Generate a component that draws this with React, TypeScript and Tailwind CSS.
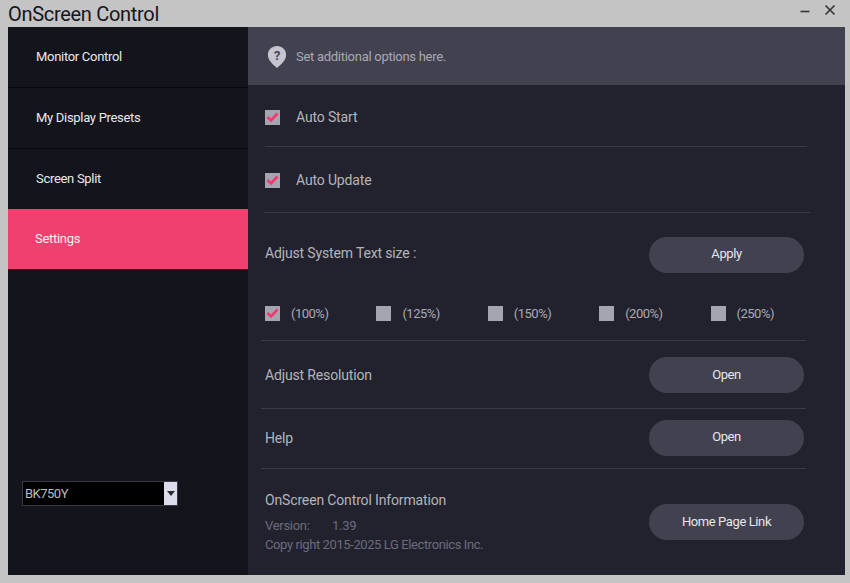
const navItems = ['Monitor Control', 'My Display Presets', 'Screen Split'];
const sizes = ['(100%)', '(125%)', '(150%)', '(200%)', '(250%)'];

function CheckBox({ checked }: { checked: boolean }) {
  return (
    <span className="flex h-[15px] w-[15px] shrink-0 items-center justify-center bg-[#a5a4b1]">
      {checked && (
        <svg width="13" height="11" viewBox="0 0 13 11" fill="none">
          <path d="M1.5 5L5 8.5L11.5 1.5" stroke="#f5376f" strokeWidth="2.6" />
        </svg>
      )}
    </span>
  );
}

function PillButton({ label }: { label: string }) {
  return (
    <button type="button" className="h-[36px] w-[155px] rounded-full bg-[#42414f] pb-[1px] text-[13px] tracking-[-0.4px] text-[#e6e6ea]">
      {label}
    </button>
  );
}

export default function App() {
  return (
    <div className="flex h-[583px] w-[850px] flex-col bg-[#c4c4c4] font-['Roboto',sans-serif] text-[14px]">
      <div className="flex h-[27px] items-end justify-between pl-[8px] pr-[14px]">
        <span className="text-[20px] leading-[25px] tracking-[-0.3px] text-[#15151b]">OnScreen Control</span>
        <div className="flex items-center gap-[14px] self-start pt-[4px]">
          <svg width="10" height="12" viewBox="0 0 10 12">
            <path d="M0.5 7.5H9.5" stroke="#333" strokeWidth="1.6" />
          </svg>
          <svg width="12" height="12" viewBox="0 0 12 12" fill="none">
            <path d="M1.5 1.5L10.5 10.5M10.5 1.5L1.5 10.5" stroke="#333" strokeWidth="1.6" />
          </svg>
        </div>
      </div>

      <div className="ml-[8px] flex h-[548px] w-[837px]">
        <aside className="flex w-[240px] shrink-0 flex-col bg-[#14141c] text-[13px] tracking-[-0.3px]">
          {navItems.map((item) => (
            <div key={item} className="flex h-[61px] items-center border-b border-[#08080c] pl-[28px] text-[#e8e8ec]">
              {item}
            </div>
          ))}
          <div className="-mt-px flex h-[60px] items-center bg-[#f0406f] pl-[27px] text-[#f6f0f2]">Settings</div>
          <div className="mt-[212px] ml-[14px] flex h-[25px] w-[156px] items-stretch border border-[#3a3a42] bg-black">
            <span className="flex-1 pl-[2px] text-[13px] leading-[23px] tracking-[-0.5px] text-[#b9bcc0]">BK750Y</span>
            <span className="flex w-[13px] items-center justify-center bg-[#dcdcec]">
              <svg width="8" height="5" viewBox="0 0 8 5">
                <path d="M0 0H8L4 5Z" fill="#2a2a32" />
              </svg>
            </span>
          </div>
        </aside>

        <main className="flex min-w-0 flex-1 flex-col bg-[#22222e] text-[14px] tracking-[-0.15px] text-[#b4b4bc]">
          <div className="flex h-[58px] items-center gap-[9px] bg-[#42414f] pl-[19px] pt-[2px] text-[13px] tracking-[-0.28px] text-[#a9a9b4]">
            <svg width="20" height="24" viewBox="0 0 22 26">
              <path d="M11 1C5.5 1 1 5.3 1 10.7C1 16.5 6.5 21 11 25C15.5 21 21 16.5 21 10.7C21 5.3 16.5 1 11 1Z" fill="#c5c4d0" />
              <text x="11" y="16" textAnchor="middle" fontSize="14" fontWeight="700" fill="#42414f">?</text>
            </svg>
            <span>Set additional options here.</span>
          </div>

          <div className="ml-[17px] mr-[38px] flex h-[62px] items-center gap-[16px] border-b border-[#3b3b46] pt-[3px]">
            <CheckBox checked />
            <span>Auto Start</span>
          </div>
          <div className="ml-[16px] mr-[35px] flex h-[66px] items-center gap-[16px] border-b border-[#3b3b46] pl-px pt-[1px]">
            <CheckBox checked />
            <span>Auto Update</span>
          </div>

          <div className="ml-[17px] mr-[41px] flex h-[82px] items-center justify-between pt-[1px]">
            <span className="mb-[3px]">Adjust System Text size :</span>
            <PillButton label="Apply" />
          </div>
          <div className="ml-[13px] mr-[39px] flex h-[46px] items-start border-b border-[#3b3b46] pl-[4px] pt-[9px]">
            {sizes.map((size, i) => (
              <div key={size} className="flex w-[111.4px] shrink-0 items-center gap-[11px]">
                <CheckBox checked={i === 0} />
                <span className="text-[13px] tracking-[-0.5px] text-[#a9a9b4]">{size}</span>
              </div>
            ))}
          </div>

          <div className="ml-[13px] mr-[39px] flex h-[68px] items-center justify-between border-b border-[#3b3b46] pl-[4px] pr-[2px] pt-[1px]">
            <span className="mt-[1px]">Adjust Resolution</span>
            <PillButton label="Open" />
          </div>
          <div className="ml-[13px] mr-[39px] flex h-[60px] items-center justify-between border-b border-[#3b3b46] pb-[2px] pl-[4px] pr-[2px]">
            <span className="mt-[1px]">Help</span>
            <PillButton label="Open" />
          </div>

          <div className="ml-[17px] mr-[41px] flex flex-1 items-start justify-between pt-[22px]">
            <div className="flex flex-col">
              <span className="leading-[18px]">OnScreen Control Information</span>
              <span className="mt-[8px] flex text-[13px] leading-[17px] tracking-[-0.3px] text-[#6b6b7c]">
                <span className="w-[67px]">Version:</span>
                <span>1.39</span>
              </span>
              <span className="mt-[2px] text-[13px] leading-[17px] tracking-[-0.4px] text-[#6b6b7c]">Copy right 2015-2025 LG Electronics Inc.</span>
            </div>
            <div className="mt-[13px]">
              <PillButton label="Home Page Link" />
            </div>
          </div>
        </main>
      </div>
    </div>
  );
}
